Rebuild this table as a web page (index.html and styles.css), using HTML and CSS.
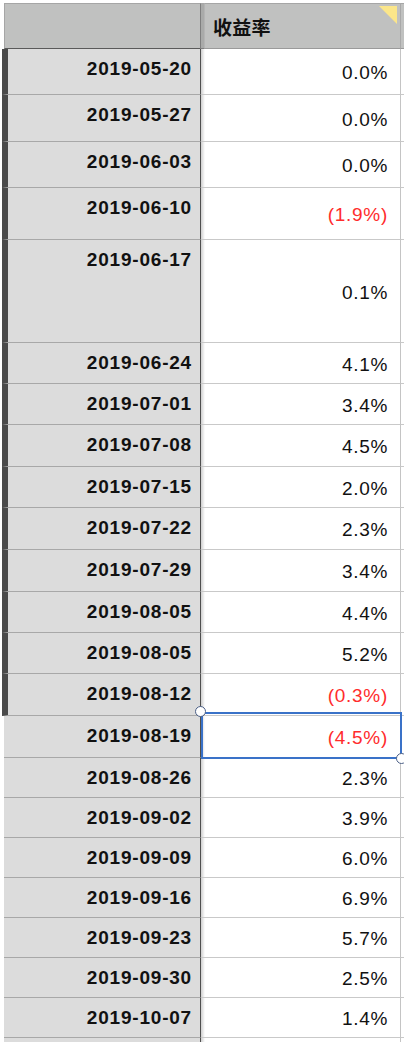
FILE: index.html
```html
<!DOCTYPE html>
<html lang="zh">
<head>
    <meta charset="UTF-8">
    <meta name="viewport" content="width=device-width, initial-scale=1.0">
    <title>收益率</title>
    <link rel="stylesheet" href="styles.css">
</head>
<body>
    <div class="sheet">
        <div class="head">
            <div class="h-date"></div>
            <div class="h-sep"></div>
            <div class="h-val">收益率<span class="note"></span></div>
            <div class="h-rest"></div>
        </div>

        <div class="row grp h46"><div class="date">2019-05-20</div><div class="val">0.0%</div><div class="rest"></div></div>
        <div class="row grp h47"><div class="date">2019-05-27</div><div class="val">0.0%</div><div class="rest"></div></div>
        <div class="row grp h46"><div class="date">2019-06-03</div><div class="val">0.0%</div><div class="rest"></div></div>
        <div class="row grp h52"><div class="date">2019-06-10</div><div class="val neg">(1.9%)</div><div class="rest"></div></div>
        <div class="row grp h103"><div class="date">2019-06-17</div><div class="val">0.1%</div><div class="rest"></div></div>
        <div class="row grp"><div class="date">2019-06-24</div><div class="val">4.1%</div><div class="rest"></div></div>
        <div class="row grp"><div class="date">2019-07-01</div><div class="val">3.4%</div><div class="rest"></div></div>
        <div class="row grp h42"><div class="date">2019-07-08</div><div class="val">4.5%</div><div class="rest"></div></div>
        <div class="row grp"><div class="date">2019-07-15</div><div class="val">2.0%</div><div class="rest"></div></div>
        <div class="row grp h42"><div class="date">2019-07-22</div><div class="val">2.3%</div><div class="rest"></div></div>
        <div class="row grp h42"><div class="date">2019-07-29</div><div class="val">3.4%</div><div class="rest"></div></div>
        <div class="row grp"><div class="date">2019-08-05</div><div class="val">4.4%</div><div class="rest"></div></div>
        <div class="row grp"><div class="date">2019-08-05</div><div class="val">5.2%</div><div class="rest"></div></div>
        <div class="row grp h42"><div class="date">2019-08-12</div><div class="val neg">(0.3%)</div><div class="rest"></div></div>
        <div class="row picked">
            <div class="date">2019-08-19</div><div class="val neg">(4.5%)</div><div class="rest"></div>
            <div class="sel"></div>
            <span class="handle tl"></span>
            <span class="handle br"></span>
        </div>
        <div class="row h40"><div class="date">2019-08-26</div><div class="val">2.3%</div><div class="rest"></div></div>
        <div class="row h40"><div class="date">2019-09-02</div><div class="val">3.9%</div><div class="rest"></div></div>
        <div class="row h40"><div class="date">2019-09-09</div><div class="val">6.0%</div><div class="rest"></div></div>
        <div class="row h40"><div class="date">2019-09-16</div><div class="val">6.9%</div><div class="rest"></div></div>
        <div class="row h40"><div class="date">2019-09-23</div><div class="val">5.7%</div><div class="rest"></div></div>
        <div class="row h40"><div class="date">2019-09-30</div><div class="val">2.5%</div><div class="rest"></div></div>
        <div class="row h40"><div class="date">2019-10-07</div><div class="val">1.4%</div><div class="rest"></div></div>
        <div class="row h40"><div class="date"></div><div class="val"></div><div class="rest"></div></div>
    </div>
</body>
</html>
```

FILE: styles.css
```css
body {
    margin: 0;
    background-color: #fff;
    font-family: "Liberation Sans", "Noto Sans CJK SC", sans-serif;
    font-size: 19px;
    color: #111;
    overflow: hidden;
}
.sheet {
    padding-top: 3px;
}
.head {
    display: flex;
    height: 46px;
}
.h-date {
    margin-left: 4px;
    width: 196px;
    box-sizing: border-box;
    background-color: #c0c1c0;
    border-top: 1px solid #a6a6a6;
    border-left: 1px solid #a6a6a6;
    border-bottom: 1px solid #5a5a5a;
}
.h-sep {
    width: 5px;
    box-sizing: border-box;
    background-color: #a9aaa9;
    border-top: 1px solid #a6a6a6;
    border-left: 1px solid #7e7e7e;
    border-right: 1px solid #b4b4b4;
    border-bottom: 1px solid #7e7e7e;
}
.h-val {
    position: relative;
    width: 196px;
    box-sizing: border-box;
    background-color: #c0c1c0;
    border-top: 1px solid #a6a6a6;
    border-right: 1px solid #a9a9a9;
    border-bottom: 1px solid #9a9a9a;
    padding-left: 8px;
    display: flex;
    align-items: center;
    font-weight: bold;
    letter-spacing: 0.3px;
}
.note {
    position: absolute;
    top: 2px;
    right: 3px;
    width: 0;
    height: 0;
    border-top: 18px solid #fbe68a;
    border-left: 18px solid transparent;
}
.h-rest {
    flex: 1;
    background-color: #c0c1c0;
    border-top: 1px solid #a6a6a6;
    border-bottom: 1px solid #9a9a9a;
}

.row {
    display: flex;
    height: 41px;
}
.h40 { height: 40px; }
.h42 { height: 42px; }
.h46 { height: 46px; }
.h47 { height: 47px; }
.h52 { height: 52px; }
.h103 { height: 103px; }

.date {
    margin-left: 4px;
    width: 197px;
    box-sizing: border-box;
    background-color: #dcdcdc;
    border-bottom: 1px solid #a8a8a8;
    border-right: 1px solid #4f4f4f;
    padding: 9px 8px 0 0;
    text-align: right;
    font-weight: bold;
    letter-spacing: 0.8px;
    line-height: 22px;
}
.grp .date {
    margin-left: 2px;
    width: 199px;
    border-left: 6px solid #4b4b4b;
}
.val {
    width: 200px;
    box-sizing: border-box;
    border-bottom: 1px solid #c9c9c9;
    border-right: 1px solid #c4c4c4;
    background: linear-gradient(to right, #cfcfcf, #fff 4px);
    display: flex;
    align-items: center;
    justify-content: flex-end;
    padding: 3px 12px 0 0;
    letter-spacing: 0.7px;
}
.neg {
    color: #ff2c2c;
}
.rest {
    flex: 1;
    border-bottom: 1px solid #c9c9c9;
}

/* selected cell */
.picked {
    position: relative;
    height: 42px;
}
.sel {
    position: absolute;
    left: 201px;
    top: -4px;
    width: 201px;
    height: 47px;
    box-sizing: border-box;
    border: 2px solid #3a72c8;
}
.handle {
    position: absolute;
    width: 11px;
    height: 11px;
    box-sizing: border-box;
    border-radius: 50%;
    background-color: #fff;
    border: 1.5px solid #4b5f86;
}
.handle.tl {
    left: 195px;
    top: -10px;
}
.handle.br {
    left: 396px;
    top: 37px;
}
```
